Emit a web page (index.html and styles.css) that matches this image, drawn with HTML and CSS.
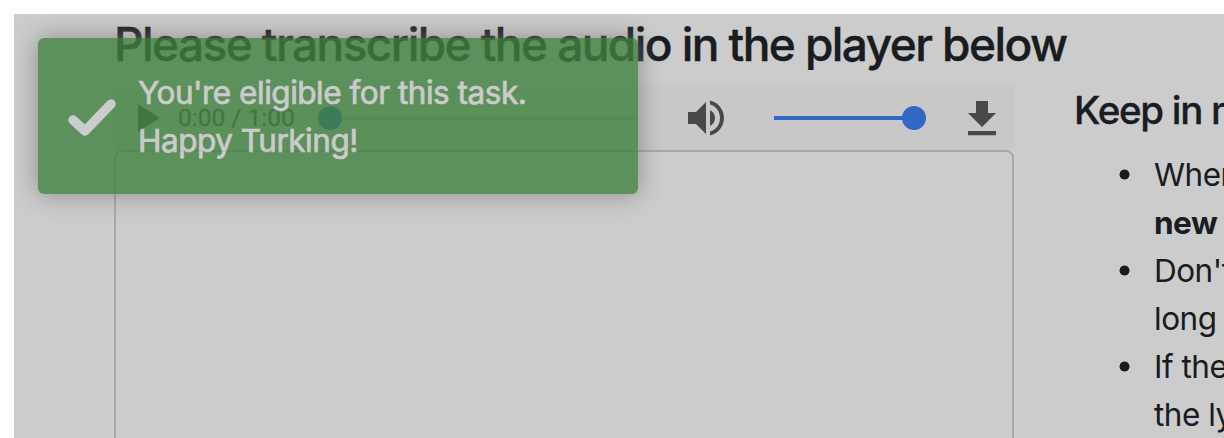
FILE: index.html
```html
<!DOCTYPE html>
<html lang="en">
<head>
<meta charset="utf-8">
<title>Transcribe</title>
<link rel="stylesheet" href="styles.css">
</head>
<body>
<main class="page">
  <h1 class="title">Please transcribe the audio in the player below</h1>
  <div class="columns">
    <section class="work">
      <div class="player">
        <svg class="play" viewBox="0 0 22 28"><path d="M0 0v28l22-14z"/></svg>
        <span class="time">0:00 / 1:00</span>
        <div class="seek"><i class="knob"></i></div>
        <svg class="speaker" viewBox="0 0 36 36"><path d="M0 12v12h8l10 10V2L8 12zM22 10v16c3-1.500 5-4.500 5-8s-2-6.500-5-8zM22 .5v4c6 1.500 10 7 10 13.500s-4 12-10 13.500v4c8-1.800 14-9 14-17.500S30 2.300 22 .5z"/></svg>
        <div class="volume"><i class="knob"></i></div>
        <svg class="download" viewBox="0 0 28 35"><path d="M8 0h12v12h8L14 26 0 12h8zM0 30h28v4.300H0z"/></svg>
      </div>
      <div class="transcript"></div>
    </section>
    <aside class="notes">
      <h2 class="notes-title">Keep in m</h2>
      <ul class="notes-list">
        <li>When<br><b>new</b></li>
        <li>Don't<br>long</li>
        <li>If the<br>the ly</li>
      </ul>
    </aside>
  </div>
  <div class="toast">
    <svg class="check" viewBox="0 0 48 48"><path d="M5 28l12 11L43 12" fill="none" stroke="#fff" stroke-width="9.500" stroke-linecap="round" stroke-linejoin="round"/></svg>
    <div class="message">You're eligible for this task.<br>Happy Turking!</div>
  </div>
  <div class="backdrop"></div>
</main>
</body>
</html>
```
FILE: styles.css
```css
* { box-sizing: border-box; }
body { margin: 0; background: #fff; overflow: hidden; font-family: Inter, sans-serif; color: #212529; }
.page { position: relative; margin: 14px 0 0 14px; height: 424px; overflow: hidden; white-space: nowrap; background: #fff; }
.title { margin: 0; padding: 1px 0 0 100px; height: 72px; font-size: 46px; line-height: 58px; font-weight: 500; letter-spacing: -1.560px; -webkit-text-stroke: .4px #212529; }
.columns { display: flex; gap: 60px; padding-left: 100px; }
.work { width: 900px; flex: none; }
.player { display: flex; align-items: center; height: 64px; margin-left: 1px; padding: 0 18px 0 23px; background: #fafafa; fill: #5a5a5a; }
.play { width: 22px; height: 28px; }
.time { width: 117px; margin: 0 0 2px 18px; font: 24.500px Roboto, sans-serif; color: #5a5a5a; -webkit-text-stroke: .3px #5a5a5a; }
.seek { display: flex; align-items: center; width: 320px; height: 4px; margin-left: 23px; background: #dadada; }
.knob { width: 24px; height: 24px; border-radius: 50%; background: #4081f6; }
.speaker { width: 36px; height: 36px; margin-left: 50px; }
.volume { display: flex; align-items: center; justify-content: flex-end; width: 152px; height: 4px; margin-left: 50px; background: linear-gradient(#4081f6, #4081f6) 0 0 / 140px 4px no-repeat; }
.download { width: 28px; height: 35px; margin-left: 42px; }
.transcript { height: 400px; border: 2px solid #ced4da; border-radius: 8px; }
.notes { flex: none; }
.notes-title { margin: 0; height: 65px; font-size: 38.500px; line-height: 49px; font-weight: 500; letter-spacing: -1.300px; -webkit-text-stroke: .3px #212529; }
.notes-list { margin: 0; padding-left: 45px; list-style: none; font-size: 31.500px; line-height: 48px; letter-spacing: -.5px; }
.notes-list li { padding-left: 35px; background: radial-gradient(circle, #212529 4.700px, transparent 5.300px) 0 18px / 11px 11px no-repeat; }
.toast { position: absolute; left: 24px; top: 24px; display: flex; align-items: center; gap: 22px; width: 600px; height: 156px; padding: 30px; border-radius: 6px; background: #51a351; color: #fff; box-shadow: 0 0 24px #999; opacity: .8; }
.check { width: 48px; height: 48px; }
.message { padding-top: 2px; font-size: 31.500px; line-height: 48px; letter-spacing: -.480px; -webkit-text-stroke: .7px #fff; }
.backdrop { position: absolute; inset: 0; background: rgba(0, 0, 0, .2); }
```
